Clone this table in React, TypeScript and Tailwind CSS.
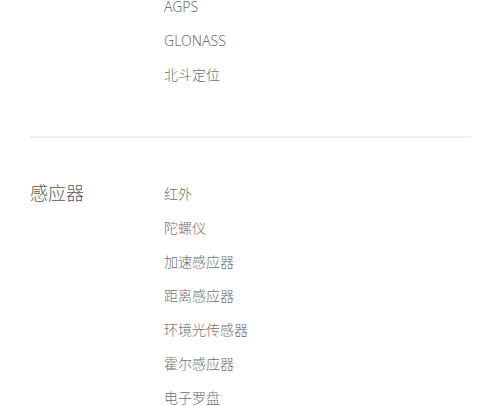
export default function App() {
  const group1 = ["AGPS", "GLONASS", "北斗定位"];
  const group2 = ["红外", "陀螺仪", "加速感应器", "距离感应器", "环境光传感器", "霍尔感应器", "电子罗盘"];
  return (
    <div
      className="w-[500px] h-[406px] overflow-hidden bg-white font-light"
      style={{ fontFamily: '"Noto Sans", "Noto Sans CJK SC", sans-serif' }}
    >
      <div className="mt-[-11px] flex pl-[30px]">
        <div className="w-[134px]" />
        <div className="flex flex-col">
          {group1.map((t) => (
            <div key={t} className="h-[34px] flex items-center text-[14px] text-[#707070]">
              {t}
            </div>
          ))}
        </div>
      </div>
      <div className="mt-[45px] ml-[30px] w-[441px] border-t-2 border-[#eeeeee]" />
      <div className="mt-[38px] flex pl-[30px]">
        <div className="w-[134px] h-[34px] flex items-center text-[18px] text-[#555]">感应器</div>
        <div className="flex flex-col">
          {group2.map((t) => (
            <div key={t} className="h-[34px] flex items-center text-[14px] text-[#707070]">
              {t}
            </div>
          ))}
        </div>
      </div>
    </div>
  );
}
